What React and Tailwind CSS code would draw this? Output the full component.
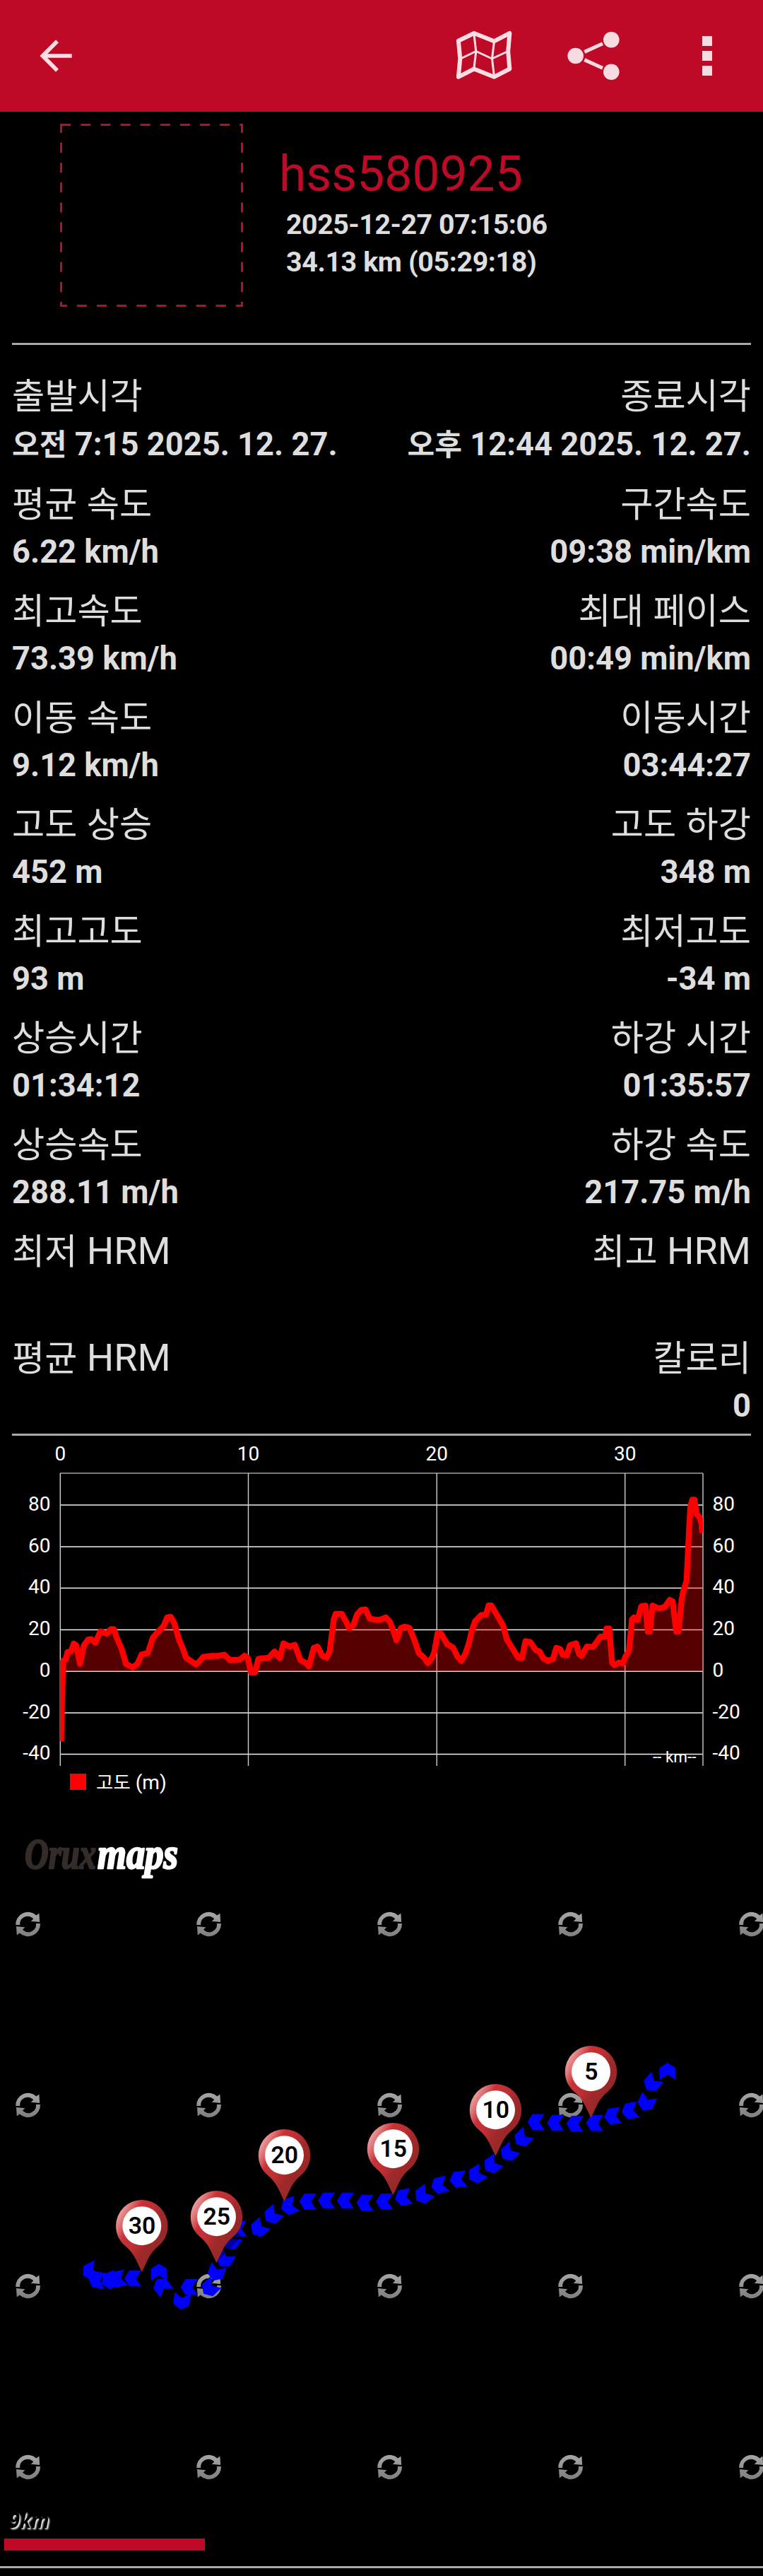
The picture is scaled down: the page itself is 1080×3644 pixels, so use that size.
import React from "react";

const ROBOTO = "Roboto, 'Noto Sans CJK KR', sans-serif";

/* Hangul runs are set slightly smaller than the Latin text beside them. */
function Mixed({ text }) {
  return text.split(/([\uac00-\ud7a3]+)/).map((part, i) =>
    /[\uac00-\ud7a3]/.test(part) ? (
      <span key={i} className="text-[0.93em] leading-[0]">{part}</span>
    ) : (
      <React.Fragment key={i}>{part}</React.Fragment>
    )
  );
}

function TopBar() {
  return (
    <header className="flex h-[158px] items-center bg-[#be0a26] pl-[45px] pr-[45px]">
      <svg className="h-[68px] w-[68px]" viewBox="0 0 24 24" fill="#fbdde3">
        <path d="M20,11H7.83l5.59,-5.59L12,4l-8,8l8,8l1.41,-1.41L7.83,13H20v-2z" />
      </svg>
      <div className="ml-auto flex items-center">
        <svg className="h-[72px] w-[84px]" viewBox="643 43 84 72" fill="none" stroke="#fbdde3" strokeLinejoin="round" strokeLinecap="round">
          <path strokeWidth="6" d="M648.9 57.8 671 47 699.3 58.3 721.4 47 719.2 73 721.4 97.5 699.3 108.8 671 97.5 648.9 108.8 651.3 83Z" />
          <path strokeWidth="3" d="M671 49 673.8 73 671 96M699.3 60 696.5 83 699.3 107M652 83 673.8 72.5 696.5 83 719 72.5" />
        </svg>
        <svg className="ml-[75px] h-[72px] w-[78px]" viewBox="802 43 78 72" fill="#f6dce1">
          <circle cx="814.7" cy="79" r="11.3" />
          <circle cx="865.3" cy="56.3" r="11.3" />
          <circle cx="865.3" cy="101.7" r="11.3" />
          <path stroke="#f6dce1" strokeWidth="5" d="M827.3 73.4 853 61.7M827.3 84.6 853 96.3" />
        </svg>
        <div className="ml-[114px] mr-[27px] flex flex-col gap-[7px]">
          <span className="h-[14px] w-[14px] bg-[#f6dce1]" />
          <span className="h-[14px] w-[14px] bg-[#f6dce1]" />
          <span className="h-[14px] w-[14px] bg-[#f6dce1]" />
        </div>
      </div>
    </header>
  );
}

function Profile() {
  return (
    <section className="flex h-[327px]">
      <svg className="ml-[85px] mt-[17px] h-[259px] w-[259px] shrink-0" viewBox="85 175 259 259" stroke="#b0122b" strokeWidth="3" strokeDasharray="14.06 14.06">
        <path d="M85 176.5H344" strokeDashoffset="-1.2" />
        <path d="M342.5 175V434" strokeDashoffset="1.1" />
        <path d="M86.5 175V434" strokeDashoffset="1.1" />
        <path d="M85 432.5H344" strokeDashoffset="4.2" />
      </svg>
      <div className="ml-[51px] pt-[47px]">
        <h1 className="h-[86px] text-[69.6px] font-normal leading-[82px] text-[#bd0b27]">hss580925</h1>
        <p className="pl-[10px] text-[39.4px] font-bold leading-[53px] tracking-[-0.52px]">2025-12-27 07:15:06</p>
        <p className="pl-[10px] text-[39.4px] font-bold leading-[53px] tracking-[-0.4px]">34.13 km (05:29:18)</p>
      </div>
    </section>
  );
}

const STATS = [
  ["출발시각", "오전 7:15 2025. 12. 27.", "종료시각", "오후 12:44 2025. 12. 27."],
  ["평균 속도", "6.22 km/h", "구간속도", "09:38 min/km"],
  ["최고속도", "73.39 km/h", "최대 페이스", "00:49 min/km"],
  ["이동 속도", "9.12 km/h", "이동시간", "03:44:27"],
  ["고도 상승", "452 m", "고도 하강", "348 m"],
  ["최고고도", "93 m", "최저고도", "-34 m"],
  ["상승시간", "01:34:12", "하강 시간", "01:35:57"],
  ["상승속도", "288.11 m/h", "하강 속도", "217.75 m/h"],
  ["최저 HRM", "", "최고 HRM", ""],
  ["평균 HRM", "", "칼로리", "0"],
];

function Stat({ label, value, first }) {
  return (
    <div>
      <div className="h-16 text-[54px] leading-[64px]"><Mixed text={label} /></div>
      <div className={first ? "h-[73px] text-[45.3px] font-bold leading-[73px]" : "h-[71px] text-[45.3px] font-bold leading-[71px]"}>
        <Mixed text={value} />
      </div>
    </div>
  );
}

function Stats() {
  return (
    <section className="flex flex-col gap-4 px-[17px] pb-1 pt-10">
      {STATS.map(([la, va, lb, vb], i) => (
        <div key={la} className="flex justify-between whitespace-nowrap">
          <Stat label={la} value={va} first={i === 0} />
          <div className="text-right"><Stat label={lb} value={vb} first={i === 0} /></div>
        </div>
      ))}
    </section>
  );
}

/* Elevation samples on the plot's own grid. */
const ELEVATION = [
  [251,1292],[259,968],[270,962],[278,932],[292,930],[303,898],[313,905],[329,980],[345,905],[362,882],[375,880],[392,895],[412,850],[440,858],[455,840],[468,840],[478,870],[500,920],[518,980],[545,994],[565,980],[582,942],[608,936],[628,875],[655,845],[672,828],[688,792],[702,790],[716,815],[735,880],[752,920],[765,955],[790,972],[805,982],[820,970],[835,952],[870,948],[895,948],[922,943],[945,965],[985,963],[1005,947],[1018,955],[1032,1015],[1048,1015],[1062,960],[1105,955],[1128,930],[1150,957],[1165,897],[1190,910],[1212,903],[1235,965],[1255,975],[1270,990],[1290,915],[1305,910],[1325,948],[1342,955],[1355,930],[1372,800],[1380,778],[1405,778],[1420,805],[1435,835],[1452,825],[1468,780],[1485,762],[1502,760],[1520,797],[1550,803],[1568,800],
  [1586,793],[1603,810],[1618,850],[1630,885],[1648,835],[1663,830],[1683,835],[1698,870],[1723,938],[1743,955],[1758,977],[1776,955],[1786,930],[1799,855],[1813,858],[1838,900],[1863,915],[1880,950],[1896,968],[1913,940],[1928,895],[1940,845],[1953,808],[1978,783],[1998,782],[2008,745],[2020,745],[2038,775],[2068,825],[2083,880],[2108,920],[2130,955],[2146,955],[2160,888],[2180,892],[2203,925],[2218,930],[2233,957],[2253,968],[2273,960],[2287,915],[2303,920],[2313,943],[2330,945],[2343,905],[2368,897],[2380,940],[2390,948],[2413,910],[2438,912],[2468,870],[2488,870],[2493,837],[2504,837],[2516,975],[2526,985],[2543,975],[2561,978],[2571,950],[2585,930],[2598,800],[2606,793],[2621,803],[2636,748],[2653,745],[2663,850],[2671,850],[2682,745],[2708,757],[2733,750],[2753,722],[2765,728],[2780,850],[2789,850],[2802,720],[2808,690],[2822,645],[2832,450],[2838,345],[2846,318],[2855,318],[2863,375],[2876,390],[2884,415],[2886,452],
];
const LINE = ELEVATION.map(([x, y]) => `${(x / 2.904).toFixed(1)},${(2010 + y / 2.851).toFixed(1)}`).join(" ");
const LEVELS = [[80, 2129], [60, 2188], [40, 2246.5], [20, 2305.5], [0, 2364.3], [-20, 2423], [-40, 2481.5]];
const TICKS = [[0, 85.3], [10, 351.5], [20, 618.3], [30, 884.7]];

function Chart() {
  return (
    <svg className="block h-[529px] w-[1080px]" viewBox="0 2031 1080 529" fontFamily={ROBOTO} fontSize="28" fill="#fff">
      <defs>
        <clipPath id="plot"><rect x="85" y="2084" width="910" height="414" /></clipPath>
      </defs>
      <g stroke="#cfcfcf" strokeWidth="1.4">
        <path d="M85 2084H995" stroke="#a0a0a0" strokeWidth="1.5" />
        {LEVELS.map(([v, y]) => <path key={v} d={`M85 ${y}H995`} stroke="#f0f0f0" />)}
        {TICKS.map(([v, x]) => <path key={v} d={`M${x} 2084V2498`} />)}
        <path d="M995 2084V2498" stroke="#a8a8a8" strokeWidth="1.7" />
      </g>
      <g clipPath="url(#plot)">
        <polygon points={`86,2364.3 ${LINE} 995,2364.3`} fill="#f00" fillOpacity="0.33" />
        <polyline points={LINE} fill="none" stroke="#f00" strokeWidth="8.4" strokeLinejoin="round" />
      </g>
      {TICKS.map(([v, x]) => <text key={v} x={x} y="2066" textAnchor="middle">{v}</text>)}
      {LEVELS.map(([v, y]) => (
        <g key={v}>
          <text x="71.5" y={y + 7.7} textAnchor="end">{v}</text>
          <text x="1008.5" y={y + 7.7}>{v}</text>
        </g>
      ))}
      <text x="985.5" y="2492.6" fontSize="22.5" textAnchor="end">-- km--</text>
      <rect x="99" y="2509" width="23" height="23" fill="#f00" />
      <text x="136" y="2530.5" fontSize="28.1"><tspan fontSize="26.5">고도</tspan> (m)</text>
    </svg>
  );
}

/* x, y, clockwise rotation from a left-pointing chevron */
const TRACK = [
  [945,2930,90],[923,2947,-50],[914.8,2974.5,-65],[891.8,2986,-10],[867,2993.5,-7],[841.7,3003.2,0],[813.8,3004.3,1],[786.3,3003,0],[758.7,3001.8,0],
  [739.6,3025,-43],[720,3045.3,-43],[696.4,3062.5,-37],[674.4,3076.4,-32],[648.3,3083,-7],[621.9,3091.3,-14],[598.8,3105.2,-37],[570.8,3108.5,-12],[544.2,3114.2,0],
  [516.6,3116,1],[489,3113,0],[462.2,3113,0],[435.7,3114.3,0],[409.2,3120.8,-20],[385.5,3133.9,-41],[366.4,3152.3,-42],[337,3153,-2],[327,3171,-55],[318,3196,-58],
  [306,3215,-70],[297,3236.5,-43],[267.6,3235.3,0],[257.2,3255.3,-84],[229,3234,54],[225,3214.3,90],[188,3223,0],[166.5,3224,-14],[155,3226,-22],[137,3225,8],[128,3213,-28],
];
const PINS = [[30, 200.8, 3148.7], [25, 306.5, 3135.7], [20, 402.5, 3048.7], [15, 556.5, 3039.7], [10, 701.5, 2984.7], [5, 836.5, 2930.7]];
const PIN_SHAPE = "M0 65.3 L-8.5 47.5 C-13 38 -18 33 -25.5 26.5 C-33 19.5 -36.7 10 -36.7 0 A36.7 36.7 0 0 1 36.7 0 C36.7 10 33 19.5 25.5 26.5 C18 33 13 38 8.5 47.5Z";
const ARC = "M-17.4 1 A17.4 17.4 0 0 1 11.8 -12.6 L15.8 -15.6 L16.6 -2.9 L4.2 -4.2 L7.6 -7.6 A11 11 0 0 0 -11.4 1Z";

function TrackMap() {
  return (
    <svg className="block h-[1070px] w-[1080px]" viewBox="0 2560 1080 1070" fontFamily={ROBOTO}>
      <defs>
        <linearGradient id="pin" gradientUnits="userSpaceOnUse" x1="-36.7" y1="-10" x2="30" y2="26">
          <stop offset="0" stopColor="#ee9fa1" />
          <stop offset="0.12" stopColor="#de7476" />
          <stop offset="0.28" stopColor="#c93236" />
          <stop offset="0.52" stopColor="#bd2f32" />
          <stop offset="0.72" stopColor="#9f292a" />
          <stop offset="1" stopColor="#962728" />
        </linearGradient>
        <linearGradient id="sync" gradientUnits="userSpaceOnUse" x1="0" y1="-17" x2="0" y2="17">
          <stop offset="0" stopColor="#a6a6a6" />
          <stop offset="1" stopColor="#808080" />
        </linearGradient>
        <linearGradient id="syncFlip" gradientUnits="userSpaceOnUse" x1="0" y1="17" x2="0" y2="-17">
          <stop offset="0" stopColor="#a0a0a0" />
          <stop offset="1" stopColor="#808080" />
        </linearGradient>
      </defs>
      <g fontFamily="'Liberation Serif', serif" fontWeight="700" fontStyle="italic" fontSize="62" strokeWidth="2.6" strokeLinejoin="round">
        <text x="35" y="2642.5" textLength="101" lengthAdjust="spacingAndGlyphs" fill="#332c29" stroke="#332c29">Orux</text>
        <text x="138" y="2642.5" textLength="114" lengthAdjust="spacingAndGlyphs" fill="#fff" stroke="#fff">maps</text>
      </g>
      {[2722, 2978, 3234, 3490].map((y) =>
        [39.6, 295.6, 551.6, 807.6, 1063.6].map((x) => (
          <g key={`${x}-${y}`} transform={`translate(${x} ${y})`}>
            <path d={ARC} fill="url(#sync)" />
            <path d={ARC} fill="url(#syncFlip)" transform="rotate(180)" />
          </g>
        ))
      )}
      {TRACK.map(([x, y, a], i) => (
        <polygon key={i} fill="#00f" points="-12,0 -5,-11.3 12,-11.3 4.5,0 12,11.3 -5,11.3" transform={`translate(${x} ${y}) rotate(${a})`} />
      ))}
      {PINS.map(([km, x, y]) => (
        <g key={km} transform={`translate(${x} ${y})`}>
          <path d="M0 65 L7 57 Q20 46 34 28 L28 18 Q12 40 0 65Z" fill="#000" fillOpacity="0.4" />
          <path d={PIN_SHAPE} fill="url(#pin)" />
          <circle r="27.5" fill="#fff" />
          <text y="11.5" x="0.3" textAnchor="middle" fontSize="33.75" fontWeight="600">{km}</text>
        </g>
      ))}
      <text x="12.5" y="3576" fontSize="31" fontWeight="700" fontStyle="italic" fontFamily="'Open Sans', sans-serif" textLength="57" lengthAdjust="spacingAndGlyphs" fill="#000" className="[filter:drop-shadow(2px_2px_1px_#fff)]">9km</text>
      <rect x="6" y="3591" width="284" height="17" fill="#be0a26" />
    </svg>
  );
}

export default function App() {
  return (
    <main className="h-[3644px] w-[1080px] overflow-hidden bg-black font-[Roboto,'Noto_Sans_CJK_KR',sans-serif] text-[#dedede]">
      <TopBar />
      <Profile />
      <hr className="mx-[17px] h-[3px] border-0 bg-[#a9a9a9]" />
      <Stats />
      <hr className="mx-[17px] h-[3px] border-0 bg-[#a9a9a9]" />
      <Chart />
      <TrackMap />
      <hr className="h-[3px] border-0 bg-[#a9a9a9]" />
    </main>
  );
}
